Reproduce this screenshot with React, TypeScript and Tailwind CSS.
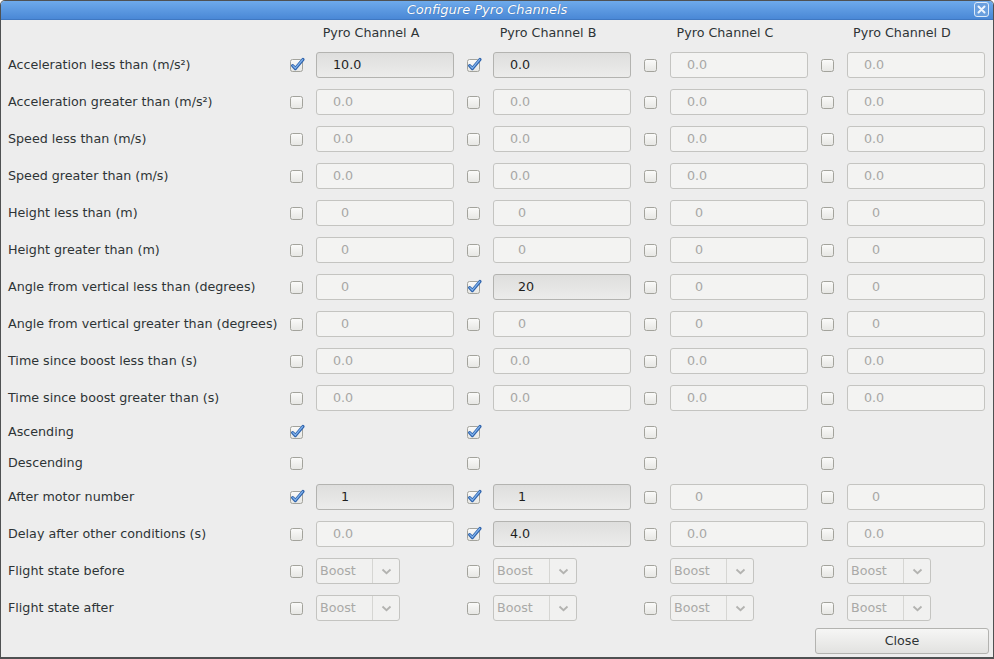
import React from "react";

type Cell =
  | { kind: "field"; checked: boolean; value: string; int?: boolean }
  | { kind: "check"; checked: boolean }
  | { kind: "combo"; checked: boolean };

function CheckBox({ checked }: { checked: boolean }) {
  return (
    <svg width="16" height="16" viewBox="0 0 16 16" className="block">
      <defs>
        <linearGradient id="cbg" x1="0" y1="0" x2="0" y2="1">
          <stop offset="0" stopColor="#fbfbfa" />
          <stop offset="1" stopColor="#e6e6e3" />
        </linearGradient>
      </defs>
      <rect x="0.5" y="2.5" width="12" height="12" rx="2" fill="url(#cbg)" stroke="#a3a39c" />
      {checked && (
        <>
          <path d="M2.6 8.6 L5.4 11.6 L13 2.4" fill="none" stroke="#2f64ad" strokeWidth="3.2" strokeLinecap="round" strokeLinejoin="round" />
          <path d="M2.8 8.6 L5.4 11.2 L12.6 2.6" fill="none" stroke="#80b2ec" strokeWidth="1.3" strokeLinecap="round" strokeLinejoin="round" />
        </>
      )}
    </svg>
  );
}

function Field({ checked, value, int }: { checked: boolean; value: string; int?: boolean }) {
  return (
    <div
      className={
        "w-[138px] h-[26px] shrink-0 rounded-[3px] border flex items-center " +
        (int ? "pl-[24px] " : "pl-[16px] ") +
        (checked
          ? "border-[#b3b3b0] bg-gradient-to-b from-[#dededd] to-[#ececeb] text-[#1e1e1e]"
          : "border-[#c4c4c1] bg-[#f3f3f2] text-[#a7a7a5]")
      }
    >
      {value}
    </div>
  );
}

function Combo() {
  return (
    <div className="w-[84px] h-[26px] shrink-0 rounded-[3px] border border-[#c4c4c1] bg-[#f1f1f0] flex items-center text-[#a9a9a7]">
      <div className="w-[56px] pl-[3px] h-full flex items-center border-r border-[#d6d6d3]">Boost</div>
      <div className="flex-1 flex items-center justify-center">
        <svg width="11" height="7" viewBox="0 0 11 7">
          <path d="M1.5 1.5 L5.5 5.2 L9.5 1.5" fill="none" stroke="#b3b3b0" strokeWidth="1.8" />
        </svg>
      </div>
    </div>
  );
}

type Row = { label: string; cells: Cell[]; h: number };

const f = (checked: boolean, value: string, int = false): Cell => ({ kind: "field", checked, value, int });
const c = (checked: boolean): Cell => ({ kind: "check", checked });
const cb = (checked: boolean): Cell => ({ kind: "combo", checked });

const rows: Row[] = [
  { label: "Acceleration less than (m/s²)", h: 26, cells: [f(true, "10.0"), f(true, "0.0"), f(false, "0.0"), f(false, "0.0")] },
  { label: "Acceleration greater than (m/s²)", h: 26, cells: [f(false, "0.0"), f(false, "0.0"), f(false, "0.0"), f(false, "0.0")] },
  { label: "Speed less than (m/s)", h: 26, cells: [f(false, "0.0"), f(false, "0.0"), f(false, "0.0"), f(false, "0.0")] },
  { label: "Speed greater than (m/s)", h: 26, cells: [f(false, "0.0"), f(false, "0.0"), f(false, "0.0"), f(false, "0.0")] },
  { label: "Height less than (m)", h: 26, cells: [f(false, "0", true), f(false, "0", true), f(false, "0", true), f(false, "0", true)] },
  { label: "Height greater than (m)", h: 26, cells: [f(false, "0", true), f(false, "0", true), f(false, "0", true), f(false, "0", true)] },
  { label: "Angle from vertical less than (degrees)", h: 26, cells: [f(false, "0", true), f(true, "20", true), f(false, "0", true), f(false, "0", true)] },
  { label: "Angle from vertical greater than (degrees)", h: 26, cells: [f(false, "0", true), f(false, "0", true), f(false, "0", true), f(false, "0", true)] },
  { label: "Time since boost less than (s)", h: 26, cells: [f(false, "0.0"), f(false, "0.0"), f(false, "0.0"), f(false, "0.0")] },
  { label: "Time since boost greater than (s)", h: 26, cells: [f(false, "0.0"), f(false, "0.0"), f(false, "0.0"), f(false, "0.0")] },
  { label: "Ascending", h: 20, cells: [c(true), c(true), c(false), c(false)] },
  { label: "Descending", h: 20, cells: [c(false), c(false), c(false), c(false)] },
  { label: "After motor number", h: 26, cells: [f(true, "1", true), f(true, "1", true), f(false, "0", true), f(false, "0", true)] },
  { label: "Delay after other conditions (s)", h: 26, cells: [f(false, "0.0"), f(true, "4.0"), f(false, "0.0"), f(false, "0.0")] },
  { label: "Flight state before", h: 26, cells: [cb(false), cb(false), cb(false), cb(false)] },
  { label: "Flight state after", h: 26, cells: [cb(false), cb(false), cb(false), cb(false)] },
];

export default function App() {
  return (
    <div
      className="w-[994px] h-[659px] bg-[#ededed] flex flex-col overflow-hidden text-[#2e3436] text-[12.7px] rounded-t-[5px] border border-[#4f5152] border-b-2"
      style={{ fontFamily: '"DejaVu Sans", Verdana, sans-serif' }}
    >
      {/* Title bar */}
      <div className="h-[19px] shrink-0 relative flex items-center justify-center bg-gradient-to-b from-[#6eaaeb] to-[#4a88d6] border-b border-[#3f78c2]">
        <span className="text-[13px] italic text-white mr-[20px] [text-shadow:0_0_1px_#2a5a9a]">Configure Pyro Channels</span>
        <div className="absolute right-[4px] top-[1px] w-[15px] h-[15px] rounded-[3px] border border-[#dce9f8] bg-[#6a9fde] flex items-center justify-center">
          <svg width="9" height="9" viewBox="0 0 9 9">
            <path d="M1.5 1.5 L7.5 7.5 M7.5 1.5 L1.5 7.5" stroke="#eef5fd" strokeWidth="2" strokeLinecap="round" />
          </svg>
        </div>
      </div>

      <div className="flex flex-col gap-[11px] pt-[5px]">
        {/* Header */}
        <div className="flex h-[16px] items-center">
          <div className="w-[289px] shrink-0" />
          {["A", "B", "C", "D"].map((l) => (
            <div key={l} className="w-[177px] shrink-0 flex">
              <div className="w-[162px] text-center">Pyro Channel {l}</div>
            </div>
          ))}
        </div>

        {rows.map((r) => (
          <div key={r.label} className="flex items-center" style={{ height: r.h }}>
            <div className="w-[289px] shrink-0 pl-[7px] whitespace-nowrap">{r.label}</div>
            {r.cells.map((cell, i) => (
              <div key={i} className="w-[177px] shrink-0 flex items-center">
                <div className="w-[26px] shrink-0 flex items-center">
                  <CheckBox checked={cell.checked} />
                </div>
                {cell.kind === "field" && <Field checked={cell.checked} value={cell.value} int={cell.int} />}
                {cell.kind === "combo" && <Combo />}
              </div>
            ))}
          </div>
        ))}
      </div>

      <div className="flex justify-end pr-[4px] mt-[7px]">
        <button className="w-[174px] h-[26px] rounded-[3px] border border-[#b3b3b0] bg-gradient-to-b from-[#f6f6f5] to-[#e2e2e0] text-[#2e3436]">
          Close
        </button>
      </div>
    </div>
  );
}
